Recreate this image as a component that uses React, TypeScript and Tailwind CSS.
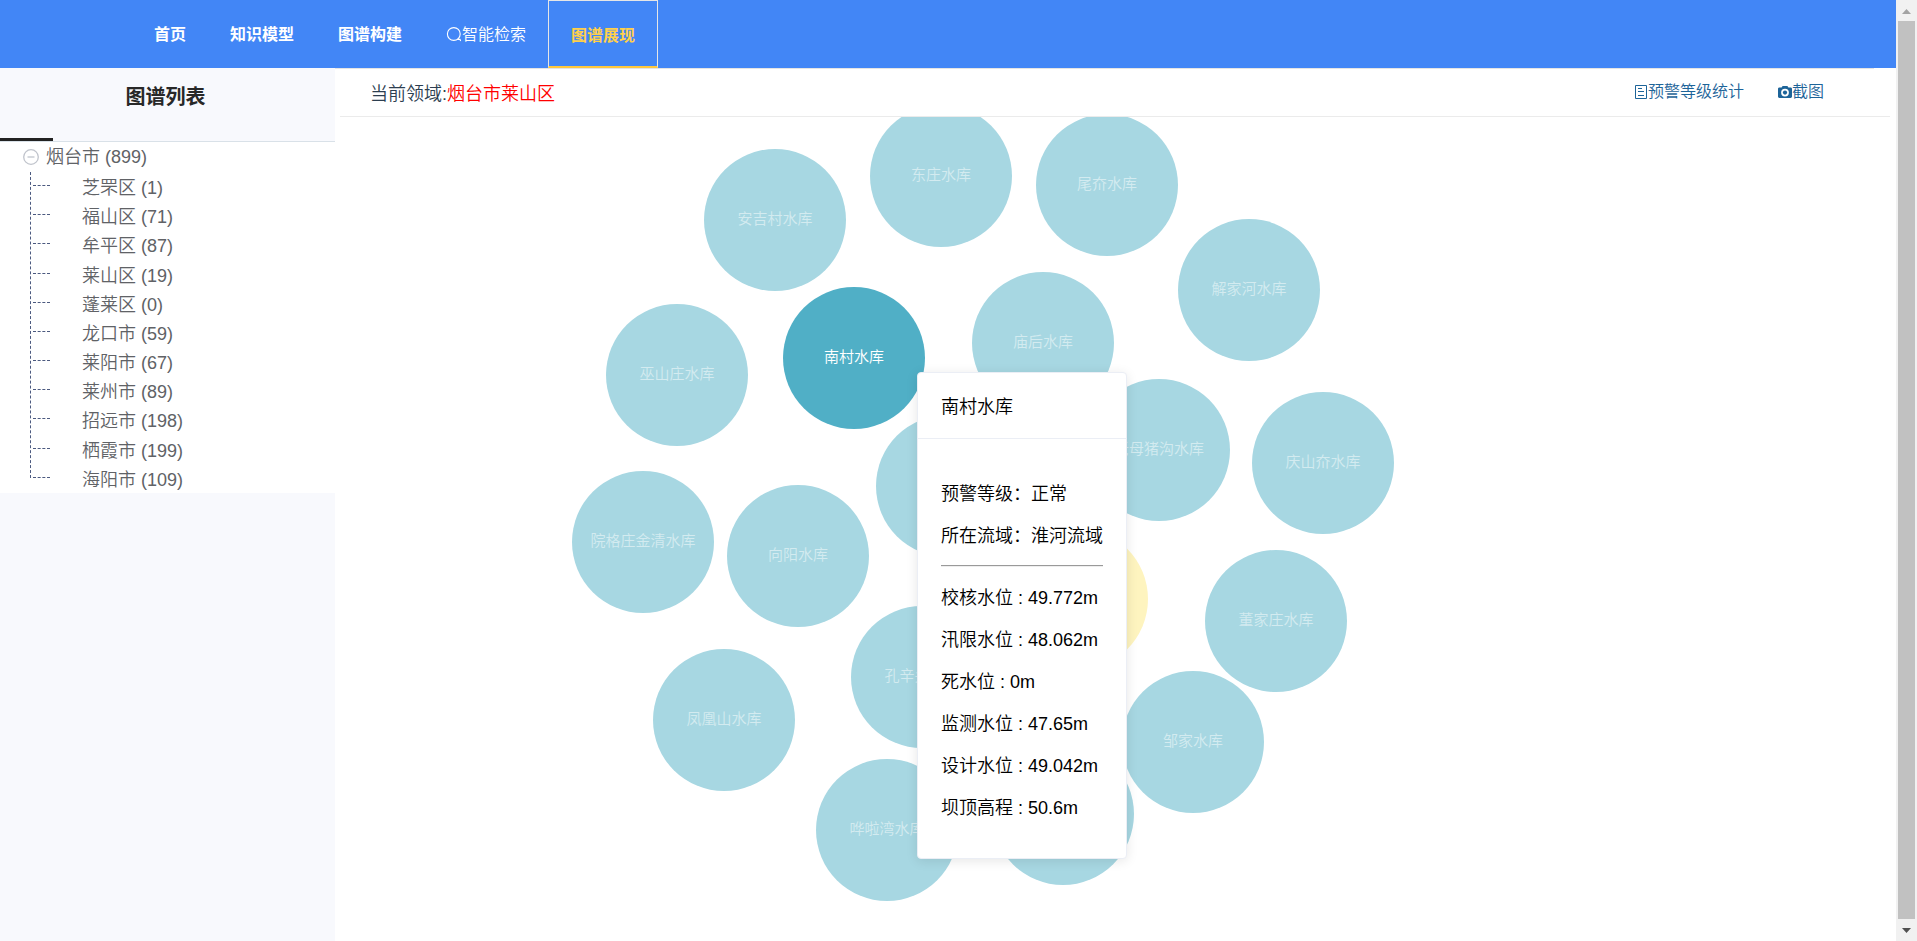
import React from 'react';

type Reservoir = { name: string; x: number; y: number; tone?: 'active' | 'warning' };

const RESERVOIRS: Reservoir[] = [
  { name: '安吉村水库', x: 435, y: 103 },
  { name: '东庄水库', x: 601, y: 59 },
  { name: '尾夼水库', x: 767, y: 68 },
  { name: '解家河水库', x: 909, y: 173 },
  { name: '庙后水库', x: 703, y: 226 },
  { name: '南村水库', x: 514, y: 241, tone: 'active' },
  { name: '巫山庄水库', x: 337, y: 258 },
  { name: '老母猪沟水库', x: 819, y: 333 },
  { name: '庆山夼水库', x: 983, y: 346 },
  { name: '院格庄金清水库', x: 303, y: 425 },
  { name: '向阳水库', x: 458, y: 439 },
  { name: '', x: 607, y: 369 },
  { name: '', x: 737, y: 482, tone: 'warning' },
  { name: '董家庄水库', x: 936, y: 504 },
  { name: '孔辛头水库', x: 582, y: 560 },
  { name: '凤凰山水库', x: 384, y: 603 },
  { name: '邹家水库', x: 853, y: 625 },
  { name: '', x: 723, y: 697 },
  { name: '哗啦湾水库', x: 547, y: 713 },
];

const REGIONS = [
  '芝罘区 (1)',
  '福山区 (71)',
  '牟平区 (87)',
  '莱山区 (19)',
  '蓬莱区 (0)',
  '龙口市 (59)',
  '莱阳市 (67)',
  '莱州市 (89)',
  '招远市 (198)',
  '栖霞市 (199)',
  '海阳市 (109)',
];

const LEVELS = [
  '校核水位 : 49.772m',
  '汛限水位 : 48.062m',
  '死水位 : 0m',
  '监测水位 : 47.65m',
  '设计水位 : 49.042m',
  '坝顶高程 : 50.6m',
];

const TONES = {
  normal: 'bg-[#a7d7e2] text-[#d3ebf0]',
  active: 'bg-[#50afc6] text-white',
  warning: 'bg-[#fef4bf] text-white',
};

function SearchIcon() {
  return (
    <svg viewBox="0 0 16 16" className="size-4" fill="none" stroke="currentColor" strokeWidth="1.1" aria-hidden="true">
      <circle cx="7.8" cy="7" r="6.4" />
      <path d="M11.200 12.400h2.800l.6 1.600" />
    </svg>
  );
}

function ReportIcon() {
  return (
    <svg viewBox="0 0 14 16" className="h-4 w-3.5" fill="none" stroke="currentColor" strokeWidth="1" aria-hidden="true">
      <path d="M1.500 1.500h11v13h-11zM4 4.500h4M4 7.500h6M4 11.500h6" />
    </svg>
  );
}

function CameraIcon() {
  return (
    <svg viewBox="0 0 14 14" className="size-3.5" fill="currentColor" aria-hidden="true">
      <path
        fillRule="evenodd"
        d="M4.600 1h4.800l1 1.600h2.200c.8 0 1.400.6 1.400 1.400v7.600c0 .8-.6 1.400-1.400 1.400H1.400C.6 13 0 12.400 0 11.600V4c0-.8.6-1.400 1.400-1.400h2.200zM7 3.700a3.900 3.900 0 1 0 0 7.800 3.900 3.900 0 0 0 0-7.800z"
      />
      <circle cx="7" cy="7.600" r="2.100" />
    </svg>
  );
}

function Header() {
  const item = 'flex items-center px-[22px] pt-0.5 text-white';
  return (
    <header className="h-[68px] shrink-0 bg-[#4286f6]">
      <nav className="flex h-full pl-[132px] text-base">
        <a href="#home" className={`${item} font-bold`}>首页</a>
        <a href="#model" className={`${item} font-bold`}>知识模型</a>
        <a href="#build" className={`${item} font-bold`}>图谱构建</a>
        <a href="#search" className={item}>
          <SearchIcon />
          智能检索
        </a>
        <a
          href="#view"
          aria-current="page"
          className="flex items-center border border-b-2 border-[#e6e6e6] border-b-[#ffc83d] px-[22px] pt-1 font-bold text-[#ffd04b]"
        >
          图谱展现
        </a>
      </nav>
    </header>
  );
}

function Sidebar() {
  return (
    <aside className="w-[335px] shrink-0 bg-[#f8f9fd]">
      <div className="flex h-[74px] flex-col justify-between border-b border-[#d9e1e8]">
        <h2 className="pt-[13px] pr-1 text-center text-xl leading-8 font-bold text-[#282828]">图谱列表</h2>
        <div className="h-[3px] w-[53px] bg-[#222]" />
      </div>
      <div className="bg-white text-lg text-[#606266]">
        <button type="button" className="flex h-[30px] items-center gap-[7px] pl-[23px]">
          <svg viewBox="0 0 16 16" className="size-4" fill="none" stroke="#c0c4cc" strokeWidth="1.300" aria-hidden="true">
            <circle cx="8" cy="8" r="7.300" />
            <path d="M4.500 8h7" />
          </svg>
          烟台市 (899)
        </button>
        <ul className="relative grid h-[321px] auto-rows-fr">
          <li aria-hidden="true" className="absolute top-0 bottom-[15px] left-[30px] border-l border-dashed border-[#4c5a80]" />
          {REGIONS.map((region) => (
            <li key={region} className="flex items-start pl-[33px]">
              <span className="mt-[13px] w-[17px] border-t border-dashed border-[#4c5a80]" />
              <a href="#region" className="pt-0.5 pl-8 leading-7">{region}</a>
            </li>
          ))}
        </ul>
      </div>
    </aside>
  );
}

function DetailCard() {
  return (
    <section className="absolute top-[255px] left-[577px] w-[210px] rounded border border-[#ebeef5] bg-white text-lg text-black shadow-[0_2px_12px_rgba(0,0,0,0.1)]">
      <h3 className="border-b border-[#ebeef5] px-[23px] pt-5 pb-4 leading-[29px]">南村水库</h3>
      <div className="px-[23px] pt-[34px] pb-[29px] leading-[42px] whitespace-nowrap">
        <p>预警等级：正常</p>
        <p>所在流域：淮河流域</p>
        <hr className="mt-2 mb-[10px] border-t border-b border-t-[#9a9a9a] border-b-[#eeeeee]" />
        {LEVELS.map((level) => (
          <p key={level}>{level}</p>
        ))}
      </div>
    </section>
  );
}

function Graph() {
  return (
    <div className="relative min-h-0 flex-1 overflow-hidden">
      {RESERVOIRS.map(({ name, x, y, tone = 'normal' }) => (
        <div
          key={`${x}-${y}`}
          className={`absolute flex size-[142px] -translate-x-1/2 -translate-y-1/2 items-center justify-center rounded-full pb-0.5 text-[15px] whitespace-nowrap ${TONES[tone]}`}
          style={{ left: x, top: y }}
        >
          {name}
        </div>
      ))}
      <DetailCard />
    </div>
  );
}

function Scrollbar() {
  return (
    <div aria-hidden="true" className="flex w-[21px] shrink-0 flex-col items-center bg-[#f1f1f1]">
      <svg viewBox="0 0 17 21" className="h-[21px] w-[17px]" fill="#a3a3a3">
        <path d="M4 14h9L8.500 9z" />
      </svg>
      <div className="w-[17px] flex-1 bg-[#c1c1c1]" />
      <svg viewBox="0 0 17 22" className="h-[22px] w-[17px]" fill="#505050">
        <path d="M4 9h9l-4.500 5z" />
      </svg>
    </div>
  );
}

export default function App() {
  return (
    <div className="flex h-screen bg-white font-['Liberation_Sans','Noto_Sans_CJK_SC',sans-serif] font-[350]">
      <div className="flex min-w-0 flex-1 flex-col">
        <Header />
        <div className="flex min-h-0 flex-1">
          <Sidebar />
          <main className="flex min-w-0 flex-1 flex-col">
            <div className="mr-[22px] border-t border-[#e4e4e4]" />
            <div className="mr-[6px] ml-[5px] flex min-h-0 flex-1 flex-col">
              <div className="flex h-12 shrink-0 items-center justify-between border-b border-[#ebebeb] pr-[66px] pl-[30px]">
                <p className="pt-0.5 text-lg text-[#2c3e50]">
                  当前领域:<span className="text-[#ff0000]">烟台市莱山区</span>
                </p>
                <div className="flex gap-[34px] pb-0.5 text-base text-[#1d6499]">
                  <button type="button" className="flex items-center">
                    <ReportIcon />
                    预警等级统计
                  </button>
                  <button type="button" className="flex items-center">
                    <CameraIcon />
                    截图
                  </button>
                </div>
              </div>
              <Graph />
            </div>
          </main>
        </div>
      </div>
      <Scrollbar />
    </div>
  );
}
